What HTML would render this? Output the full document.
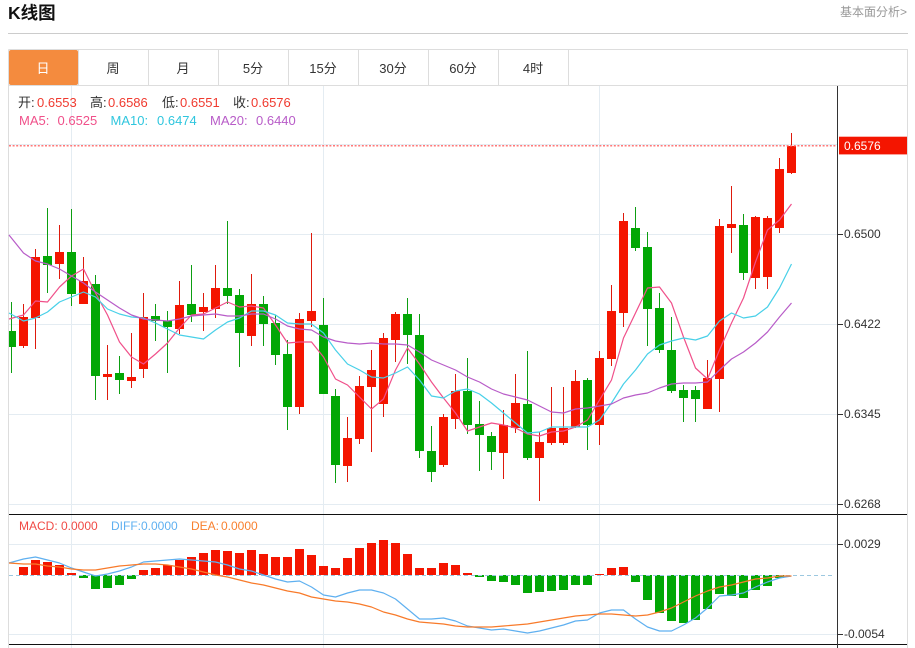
<!DOCTYPE html>
<html lang="zh">
<head>
<meta charset="utf-8">
<title>K线图</title>
<style>
html,body{margin:0;padding:0;background:#fff;width:915px;height:648px;overflow:hidden}
svg{position:absolute;left:0;top:0;display:block}
text{font-family:"Liberation Sans","Noto Sans CJK SC",sans-serif}
</style>
</head>
<body>
<svg width="915" height="648" viewBox="0 0 915 648" xmlns="http://www.w3.org/2000/svg">
<rect width="915" height="648" fill="#fff"/>
<text x="8" y="19" font-size="17.5" font-weight="700" fill="#111">K线图</text>
<text x="840" y="16" font-size="12" fill="#999">基本面分析&gt;</text>
<path d="M8 33.5H908" stroke="#ccc" fill="none"/>

<!-- container -->
<path d="M8.5 49.5H907.5V648M8.5 49.5V648M8 85.5H908" stroke="#ddd" fill="none"/>
<path d="M78.5 50V85M148.5 50V85M218.5 50V85M288.5 50V85M358.5 50V85M428.5 50V85M498.5 50V85M568.5 50V85" stroke="#ddd" fill="none"/>
<rect x="9" y="50" width="69" height="35" rx="2" fill="#f48b3e"/>
<g font-size="13" text-anchor="middle" fill="#333">
<text x="43" y="73" fill="#fff">日</text>
<text x="113" y="73">周</text>
<text x="183" y="73">月</text>
<text x="253" y="73">5分</text>
<text x="323" y="73">15分</text>
<text x="393" y="73">30分</text>
<text x="463" y="73">60分</text>
<text x="533" y="73">4时</text>
</g>

<!-- grid -->
<g shape-rendering="crispEdges" stroke="#e4ecf2" fill="none">
<path d="M9 144.5H837M9 234.5H837M9 324.5H837M9 414.5H837M9 504.5H837M9 544.5H837M9 634.5H837"/>
<path d="M71.5 86V648M323.5 86V648M599.5 86V648"/>
</g>

<!-- info text -->
<g font-size="13" fill="#333">
<text x="18" y="107">开:</text><text x="37" y="107" fill="#f03a2f">0.6553</text>
<text x="90" y="107">高:</text><text x="108" y="107" fill="#f03a2f">0.6586</text>
<text x="162" y="107">低:</text><text x="180" y="107" fill="#f03a2f">0.6551</text>
<text x="233" y="107">收:</text><text x="251" y="107" fill="#f03a2f">0.6576</text>
<text x="19" y="125" fill="#f0508a">MA5:</text><text x="57.5" y="125" fill="#f0508a">0.6525</text>
<text x="110.5" y="125" fill="#2fc6de">MA10:</text><text x="157" y="125" fill="#2fc6de">0.6474</text>
<text x="210" y="125" fill="#b85cc8">MA20:</text><text x="256" y="125" fill="#b85cc8">0.6440</text>
</g>
<g font-size="12">
<text x="19" y="530" fill="#f04a45">MACD:</text><text x="61" y="530" fill="#f04a45">0.0000</text>
<text x="111" y="530" fill="#5fb0f0">DIFF:</text><text x="141" y="530" fill="#5fb0f0">0.0000</text>
<text x="191" y="530" fill="#f8802f">DEA:</text><text x="221" y="530" fill="#f8802f">0.0000</text>
</g>

<!-- wicks -->
<path shape-rendering="crispEdges" fill="none" stroke="#de1a0c" d="M23.5 304V348M35.5 249V349M59.5 225V279M83.5 257V304M107.5 345V400M131.5 333V388M143.5 293V378M179.5 281V334M203.5 293V331M215.5 265V318M251.5 274V346M299.5 313V414M311.5 233V327M347.5 417V482M359.5 376V444M371.5 350V452M383.5 333V417M395.5 312V362M443.5 414V467M455.5 374V429M503.5 410V479M515.5 374V433M539.5 432V501M551.5 387V445M563.5 387V445M575.5 370V428M599.5 351V445M611.5 285V366M623.5 213V327M707.5 360V409M719.5 219V412M731.5 186V253M755.5 216V289M767.5 216V289M779.5 158V233M791.5 133V174"/>
<path shape-rendering="crispEdges" fill="none" stroke="#0d9e12" d="M11.5 302V373M47.5 208V293M71.5 209V306M95.5 275V400M119.5 356V394M155.5 304V341M167.5 311V373M191.5 265V322M227.5 221V304M239.5 289V367M263.5 296V346M275.5 315V365M287.5 340V430M323.5 298V394M335.5 389V483M407.5 298V364M419.5 314V458M431.5 426V482M467.5 358V434M479.5 401V471M491.5 432V470M527.5 351V460M587.5 378V450M635.5 207V251M647.5 232V346M659.5 293V353M671.5 317V393M683.5 385V422M695.5 386V422M743.5 214V280"/>

<!-- bodies -->
<path shape-rendering="crispEdges" fill="#f41500" d="M19 317h9v29h-9zM31 257h9v61h-9zM55 252h9v12h-9zM79 281h9v23h-9zM103 374h9v3h-9zM127 377h9v4h-9zM139 317h9v52h-9zM175 305h9v24h-9zM199 307h9v5h-9zM211 288h9v21h-9zM247 304h9v32h-9zM295 319h9v88h-9zM307 311h9v10h-9zM343 438h9v28h-9zM355 386h9v53h-9zM367 370h9v17h-9zM379 338h9v66h-9zM391 314h9v26h-9zM439 417h9v48h-9zM451 391h9v28h-9zM499 425h9v28h-9zM511 403h9v25h-9zM535 442h9v16h-9zM547 428h9v15h-9zM559 428h9v15h-9zM571 381h9v46h-9zM595 358h9v67h-9zM607 311h9v48h-9zM619 221h9v92h-9zM703 378h9v31h-9zM715 226h9v153h-9zM727 224h9v4h-9zM751 217h9v61h-9zM763 218h9v59h-9zM775 169h9v59h-9zM787 146h9v27h-9z"/>
<path shape-rendering="crispEdges" fill="#02a705" d="M9 331h7v16h-7zM43 256h9v9h-9zM67 252h9v42h-9zM91 284h9v92h-9zM115 373h9v7h-9zM151 316h9v5h-9zM163 321h9v6h-9zM187 304h9v11h-9zM223 288h9v8h-9zM235 295h9v38h-9zM259 304h9v20h-9zM271 323h9v32h-9zM283 354h9v53h-9zM319 325h9v69h-9zM331 396h9v69h-9zM403 314h9v21h-9zM415 335h9v116h-9zM427 451h9v21h-9zM463 391h9v34h-9zM475 424h9v11h-9zM487 436h9v16h-9zM523 404h9v54h-9zM583 380h9v45h-9zM631 228h9v20h-9zM643 247h9v62h-9zM655 308h9v42h-9zM667 350h9v41h-9zM679 390h9v8h-9zM691 390h9v9h-9zM739 225h9v48h-9z"/>

<!-- price line -->
<path d="M9 145.7H838" stroke="#f77" stroke-width="1.5" stroke-dasharray="2 1.6" fill="none"/>

<!-- MA lines -->
<g fill="none" stroke-width="1.2" stroke-linejoin="round">
<polyline stroke="#f0508a" points="9,319 23.5,315 35.5,301 47.5,302 59.5,287 71.5,276 83.5,269 95.5,293 107.5,315 119.5,342 131.5,357 143.5,364 155.5,354 167.5,343 179.5,328 191.5,315 203.5,314 215.5,308 227.5,302 239.5,307 251.5,306 263.5,308 275.5,325 287.5,343 299.5,342 311.5,342 323.5,357 335.5,379 347.5,385 359.5,397 371.5,409 383.5,399 395.5,370 407.5,348 419.5,364 431.5,382 443.5,398 455.5,413 467.5,431 479.5,427 491.5,423 503.5,425 515.5,428 527.5,434 539.5,436 551.5,432 563.5,431 575.5,427 587.5,420 599.5,400 611.5,380 623.5,338 635.5,313 647.5,288 659.5,287 671.5,303 683.5,337 695.5,368 707.5,379 719.5,350 731.5,323 743.5,298 755.5,262 767.5,230 779.5,220 791.5,204"/>
<polyline stroke="#48d0e8" points="9,313 23.5,321 35.5,318 47.5,312 59.5,302 71.5,297 83.5,292 95.5,297 107.5,309 119.5,314 131.5,317 143.5,318 155.5,323 167.5,329 179.5,335 191.5,337 203.5,339 215.5,330 227.5,322 239.5,318 251.5,311 263.5,311 275.5,315 287.5,323 299.5,324 311.5,324 323.5,333 335.5,350 347.5,364 359.5,370 371.5,377 383.5,378 395.5,373 407.5,367 419.5,380 431.5,396 443.5,398 455.5,391 467.5,389 479.5,394 491.5,403 503.5,413 515.5,423 527.5,433 539.5,432 551.5,427 563.5,427 575.5,427 587.5,427 599.5,420 611.5,403 623.5,384 635.5,370 647.5,354 659.5,345 671.5,341 683.5,338 695.5,340 707.5,336 719.5,321 731.5,313 743.5,318 755.5,316 767.5,307 779.5,288 791.5,264"/>
<polyline stroke="#b85cc8" points="9,235 23.5,253 35.5,261 47.5,264 59.5,269 71.5,276 83.5,283 95.5,292 107.5,300 119.5,308 131.5,315 143.5,319 155.5,320 167.5,321 179.5,319 191.5,316 203.5,315 215.5,314 227.5,316 239.5,316 251.5,314 263.5,314 275.5,319 287.5,326 299.5,329 311.5,330 323.5,337 335.5,341 347.5,343 359.5,344 371.5,343 383.5,344 395.5,344 407.5,345 419.5,352 431.5,360 443.5,365 455.5,370 467.5,377 479.5,382 491.5,389 503.5,394 515.5,397 527.5,400 539.5,406 551.5,412 563.5,413 575.5,409 587.5,408 599.5,406 611.5,404 623.5,398 635.5,395 647.5,393 659.5,388 671.5,384 683.5,383 695.5,383 707.5,382 719.5,370 731.5,359 743.5,352 755.5,343 767.5,332 779.5,317 791.5,303"/>
</g>

<!-- MACD -->
<path shape-rendering="crispEdges" fill="#f41500" d="M19 567h9v8h-9zM31 560h9v15h-9zM43 562h9v13h-9zM55 565h9v10h-9zM67 573h9v2h-9zM139 570h9v5h-9zM151 568h9v7h-9zM163 565h9v10h-9zM175 560h9v15h-9zM187 557h9v18h-9zM199 553h9v22h-9zM211 550h9v25h-9zM223 551h9v24h-9zM235 553h9v22h-9zM247 550h9v25h-9zM259 554h9v21h-9zM271 557h9v18h-9zM283 557h9v18h-9zM295 549h9v26h-9zM307 555h9v20h-9zM319 566h9v9h-9zM331 568h9v7h-9zM343 558h9v17h-9zM355 548h9v27h-9zM367 543h9v32h-9zM379 540h9v35h-9zM391 543h9v32h-9zM403 554h9v21h-9zM415 568h9v7h-9zM427 568h9v7h-9zM439 563h9v12h-9zM451 565h9v10h-9zM463 573h9v2h-9zM595 574h9v1h-9zM607 568h9v7h-9zM619 567h9v8h-9z"/>
<path shape-rendering="crispEdges" fill="#02a705" d="M79 575h9v3h-9zM91 575h9v14h-9zM103 575h9v13h-9zM115 575h9v10h-9zM127 575h9v4h-9zM475 575h9v2h-9zM487 575h9v6h-9zM499 575h9v7h-9zM511 575h9v10h-9zM523 575h9v18h-9zM535 575h9v17h-9zM547 575h9v16h-9zM559 575h9v15h-9zM571 575h9v10h-9zM583 575h9v10h-9zM631 575h9v7h-9zM643 575h9v25h-9zM655 575h9v38h-9zM667 575h9v46h-9zM679 575h9v48h-9zM691 575h9v45h-9zM703 575h9v34h-9zM715 575h9v19h-9zM727 575h9v21h-9zM739 575h9v23h-9zM751 575h9v15h-9zM763 575h9v11h-9zM775 575h9v3h-9z"/>
<path d="M9 575.5H834" stroke="#9cc8e0" stroke-dasharray="4 3" fill="none"/>
<g fill="none" stroke-width="1.2" stroke-linejoin="round">
<polyline stroke="#5fb0f0" points="9,563 23.5,559 35.5,557 47.5,560 59.5,563 71.5,568 83.5,572 95.5,576 107.5,574 119.5,571 131.5,567 143.5,562 155.5,561 167.5,560 179.5,559 191.5,560 203.5,561 215.5,562 227.5,565 239.5,569 251.5,571 263.5,575 275.5,579 287.5,582 299.5,581 311.5,587 323.5,595 335.5,597 347.5,593 359.5,590 371.5,590 383.5,593 395.5,599 407.5,609 419.5,619 431.5,619 443.5,618 455.5,621 467.5,626 479.5,628 491.5,630 503.5,629 515.5,631 527.5,633 539.5,631 551.5,628 563.5,625 575.5,621 587.5,620 599.5,613 611.5,610 623.5,610 635.5,619 647.5,627 659.5,631 671.5,631 683.5,625 695.5,618 707.5,608 719.5,596 731.5,595 743.5,593 755.5,587 767.5,582 779.5,578 791.5,576"/>
<polyline stroke="#f87a2a" points="9,563 23.5,564 35.5,564 47.5,566 59.5,567 71.5,569 83.5,570 95.5,570 107.5,568 119.5,566 131.5,565 143.5,564 155.5,564 167.5,565 179.5,567 191.5,569 203.5,572 215.5,575 227.5,577 239.5,580 251.5,583 263.5,585 275.5,588 287.5,591 299.5,593 311.5,597 323.5,599 335.5,601 347.5,602 359.5,604 371.5,607 383.5,612 395.5,615 407.5,619 419.5,622 431.5,623 443.5,624 455.5,626 467.5,627 479.5,627 491.5,627 503.5,626 515.5,625 527.5,624 539.5,622 551.5,620 563.5,618 575.5,616 587.5,615 599.5,614 611.5,614 623.5,615 635.5,616 647.5,615 659.5,612 671.5,608 683.5,602 695.5,596 707.5,591 719.5,587 731.5,585 743.5,582 755.5,579 767.5,578 779.5,576 791.5,576"/>
</g>

<!-- axes -->
<path shape-rendering="crispEdges" d="M9 514.5H907M9 644.5H907" stroke="#111" fill="none"/>
<path shape-rendering="crispEdges" d="M837.5 86V648M838 234.5H843M838 324.5H843M838 414.5H843M838 504.5H843M838 544.5H843M838 634.5H843" stroke="#333" fill="none"/>
<rect x="839" y="136.7" width="68" height="17.7" fill="#f41500"/>
<g font-size="12" fill="#333">
<text x="844" y="150" fill="#fff">0.6576</text>
<text x="844" y="238">0.6500</text>
<text x="844" y="328">0.6422</text>
<text x="844" y="418">0.6345</text>
<text x="844" y="508">0.6268</text>
<text x="844" y="548">0.0029</text>
<text x="844" y="638">-0.0054</text>
</g>
</svg>
</body>
</html>
